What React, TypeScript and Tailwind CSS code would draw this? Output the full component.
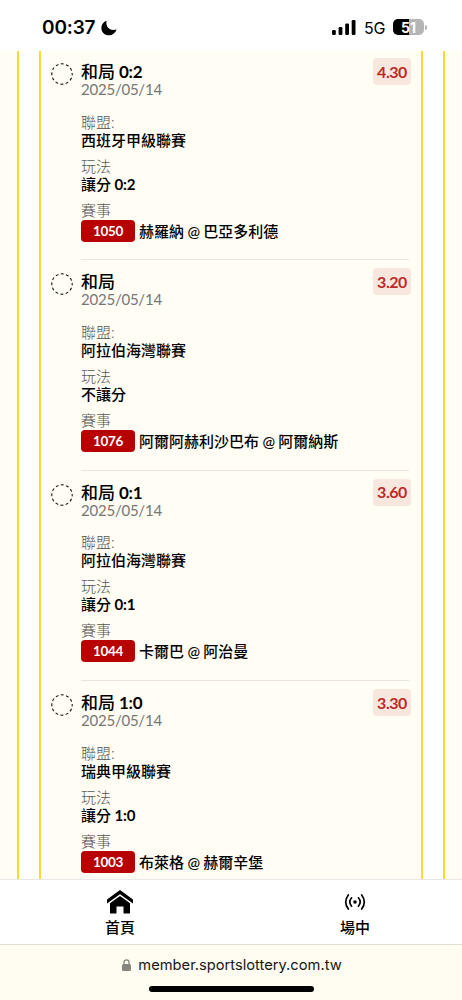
interface Bet {
  pick: string;
  handicap?: string;
  odds: string;
  league: string;
  play: string;
  code: string;
  home: string;
  away: string;
}

const bets: Bet[] = [
  { pick: "和局", handicap: "0:2", odds: "4.30", league: "西班牙甲級聯賽", play: "讓分", code: "1050", home: "赫羅納", away: "巴亞多利德" },
  { pick: "和局", odds: "3.20", league: "阿拉伯海灣聯賽", play: "不讓分", code: "1076", home: "阿爾阿赫利沙巴布", away: "阿爾納斯" },
  { pick: "和局", handicap: "0:1", odds: "3.60", league: "阿拉伯海灣聯賽", play: "讓分", code: "1044", home: "卡爾巴", away: "阿治曼" },
  { pick: "和局", handicap: "1:0", odds: "3.30", league: "瑞典甲級聯賽", play: "讓分", code: "1003", home: "布萊格", away: "赫爾辛堡" },
];

function StatusBar() {
  return (
    <header className="flex h-[51px] shrink-0 items-start bg-white pt-[17px] pr-[35px] pl-[42px] font-['Inter',sans-serif]">
      <span className="w-[56px] text-[19px] leading-[22px] font-semibold tracking-[-0.15px] whitespace-nowrap">00:37</span>
      <svg className="mt-[3px] ml-[3px] h-4 w-4" viewBox="0 0 16 16">
        <path d="M5.6 .8C4.3 6.6 8.6 11.6 15.6 9.5C14.2 13.2 11.3 15.3 8 15.3C3.7 15.3 .4 12.2 .4 8.2C.4 4.8 2.4 1.8 5.6 .8Z" />
      </svg>
      <svg className="mt-[2px] ml-auto h-4 w-6" viewBox="0 0 24 16">
        <rect x="0" y="11" width="3.8" height="5" rx="1.2" />
        <rect x="6.6" y="8" width="3.8" height="8" rx="1.2" />
        <rect x="13.2" y="4.5" width="3.8" height="11.5" rx="1.2" />
        <rect x="19.7" y="1" width="3.8" height="15" rx="1.2" />
      </svg>
      <span className="ml-[8px] w-[22px] text-[16px] leading-[22px] tracking-[-0.2px]">5G</span>
      <div className="mt-[2px] ml-[7px] flex items-center">
        <div className="flex h-4 w-[31px] items-center justify-center rounded-[5px] bg-[linear-gradient(90deg,#000_52%,#b5b5b5_52%)] text-[14px] font-bold text-white">51</div>
        <div className="ml-[1px] h-[5px] w-[2px] rounded-r-full bg-[#b5b5b5]" />
      </div>
    </header>
  );
}

function BetItem({ bet, last }: { bet: Bet; last: boolean }) {
  return (
    <article className="flex h-[210.4px] shrink-0 pr-[12px] pl-[9.5px]">
      <svg className="mt-[13px] h-[22px] w-[22px] shrink-0" viewBox="0 0 22 22">
        <circle cx="11" cy="11" r="10.2" fill="none" stroke="#111" strokeWidth="1.1" strokeDasharray="2.9 2.44" strokeDashoffset="1.45" />
      </svg>
      <div className={`ml-[8.5px] flex min-w-0 flex-1 flex-col border-b pt-[11px] text-[15px] leading-[18px] ${last ? "border-transparent" : "border-[#e8e5df]"}`}>
        <div className="flex h-[37px] justify-between">
          <div>
            <h2 className="text-[17px] leading-[21px] font-medium text-black">
              {bet.pick}
              {bet.handicap && <span className="font-bold tracking-[-0.25px]"> {bet.handicap}</span>}
            </h2>
            <p className="-mt-px leading-[17px] tracking-[-0.23px] text-[#777773]">2025/05/14</p>
          </div>
          <span className="-mt-[3px] -mr-[2px] flex h-[27px] w-[38px] items-center justify-center rounded-[4px] bg-[#f8e7df] text-[16px] font-bold tracking-[-0.45px] text-[#bd2b24]">{bet.odds}</span>
        </div>
        <dl className="mt-[14.5px] font-medium text-black">
          <dt className="font-light text-[#555552]">聯盟:</dt>
          <dd>{bet.league}</dd>
          <dt className="mt-[8px] font-light text-[#555552]">玩法</dt>
          <dd>
            {bet.play}
            {bet.handicap && <span className="font-bold tracking-[-0.15px]"> {bet.handicap}</span>}
          </dd>
          <dt className="mt-[8px] font-light text-[#555552]">賽事</dt>
          <dd className="mt-[1.2px] flex h-[22px] items-center">
            <span className="mr-[4px] flex h-[22px] w-[54px] items-center justify-center rounded-[4px] bg-[#b80000] text-[13.5px] font-bold tracking-[-0.35px] text-white">{bet.code}</span>
            <span className="whitespace-nowrap">
              {bet.home}
              <span className="tracking-[-0.3px]"> @ </span>
              {bet.away}
            </span>
          </dd>
        </dl>
      </div>
    </article>
  );
}

export default function App() {
  return (
    <div className="flex h-[1000px] w-[462px] flex-col overflow-hidden bg-white font-['Lato','Noto_Sans_CJK_TC',sans-serif] text-black">
      <StatusBar />
      <main className="flex h-[828px] shrink-0 overflow-hidden bg-[#fffdf4]">
        <div className="ml-[17px] flex w-[428px] justify-center border-x-2 border-[#ffd92f] bg-white">
          <section className="flex w-[384px] flex-col border-x-2 border-[#ffd92f] bg-[#fffdf4]">
            <div className="-mt-px flex flex-col">
              {bets.map((bet, i) => (
                <BetItem key={bet.code} bet={bet} last={i === bets.length - 1} />
              ))}
            </div>
          </section>
        </div>
      </main>
      <nav className="flex h-[65px] shrink-0 border-t border-[#e7e7e5] bg-white text-[15px] leading-[20px] font-medium">
        <a className="flex w-[240px] shrink-0 flex-col items-center pt-[9px]">
          <svg className="h-[27px] w-[28px]" viewBox="0 0 28 27">
            <path d="M14 1L27 10.5V14.5L14 5.2L1 14.5V10.5Z" />
            <path d="M14 7L24 14.2V24.5H17.5V17.5H10.5V24.5H4V14.2Z" />
          </svg>
          <span className="mt-[1px]">首頁</span>
        </a>
        <a className="flex w-[230px] shrink-0 flex-col items-center pt-[12px]">
          <svg className="h-5 w-[22px]" viewBox="0 0 22 20" fill="none" stroke="black" strokeWidth="1.7" strokeLinecap="round">
            <path d="M4.3 3Q-.9 10 4.3 17M17.7 3Q22.9 10 17.7 17M7.6 5.8Q4 10 7.6 14.2M14.4 5.8Q18 10 14.4 14.2" />
            <circle cx="11" cy="10" r="1.8" fill="black" stroke="none" />
          </svg>
          <span className="mt-[5px]">場中</span>
        </a>
      </nav>
      <footer className="flex h-[56px] shrink-0 flex-col items-center border-t border-[#dfddd7] bg-[#fffcf1] pt-[9px] font-['Inter',sans-serif]">
        <div className="ml-[2px] flex h-[22px] items-center text-[14.7px] text-[#171717]">
          <svg className="mr-[7px] h-3 w-[9px]" viewBox="0 0 9 12">
            <rect y="5" width="9" height="7" rx="1.5" fill="#85847f" />
            <path d="M2 6V3.3C2 0 7 0 7 3.3V6" fill="none" stroke="#85847f" strokeWidth="1.3" />
          </svg>
          <span>member.sportslottery.com.tw</span>
        </div>
        <div className="mt-[10px] h-[6px] w-[165px] rounded-full bg-black" />
      </footer>
    </div>
  );
}
